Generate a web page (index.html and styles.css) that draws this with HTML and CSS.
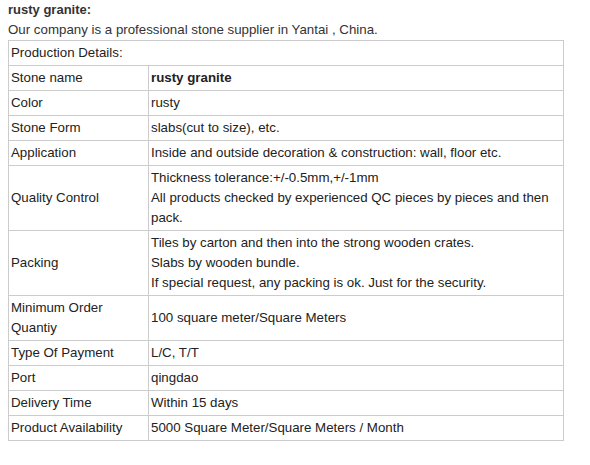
FILE: index.html
```html
<!DOCTYPE html>
<html>
<head>
<meta charset="utf-8">
<link rel="stylesheet" href="styles.css">
</head>
<body>
<div class="title">rusty granite:</div>
<div class="intro">Our company is a professional stone supplier in Yantai , China.</div>
<table class="specs">
  <colgroup><col class="col-label"><col class="col-value"></colgroup>
  <tr><td colspan="2">Production Details:</td></tr>
  <tr><td>Stone name</td><td><b>rusty granite</b></td></tr>
  <tr><td>Color</td><td>rusty</td></tr>
  <tr><td>Stone Form</td><td>slabs(cut to size), etc.</td></tr>
  <tr><td>Application</td><td>Inside and outside decoration &amp; construction: wall, floor etc.</td></tr>
  <tr><td>Quality Control</td><td>Thickness tolerance:+/-0.5mm,+/-1mm<br>All products checked by experienced QC pieces by pieces and then pack.</td></tr>
  <tr><td>Packing</td><td>Tiles by carton and then into the strong wooden crates.<br>Slabs by wooden bundle.<br>If special request, any packing is ok. Just for the security.</td></tr>
  <tr><td>Minimum Order Quantiy</td><td>100 square meter/Square Meters</td></tr>
  <tr><td>Type Of Payment</td><td>L/C, T/T</td></tr>
  <tr><td>Port</td><td>qingdao</td></tr>
  <tr><td>Delivery Time</td><td>Within 15 days</td></tr>
  <tr><td>Product Availability</td><td>5000 Square Meter/Square Meters / Month</td></tr>
</table>
</body>
</html>
```
FILE: styles.css
```css
html, body {
  background: #fff;
}
body {
  margin: 0 8px;
  font-family: "Liberation Sans", Arial, sans-serif;
  font-size: 13.3px;
  line-height: 20px;
  color: #222;
}
.title {
  font-weight: bold;
  font-size: 13px;
  color: #333;
}
.intro {
  color: #333;
}
.specs {
  border-collapse: collapse;
  width: 556px;
  table-layout: fixed;
}
.col-label {
  width: 140px;
}
.specs td {
  border: 1px solid #ccc;
  padding: 2px;
  vertical-align: middle;
  text-align: left;
}
.specs b {
  font-weight: bold;
}
```
